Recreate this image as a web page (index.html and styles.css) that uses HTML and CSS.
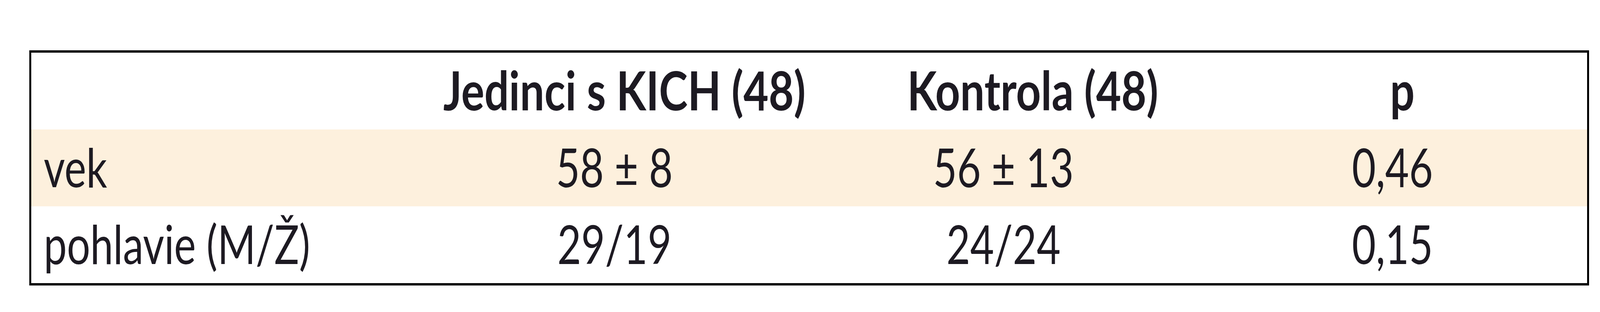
FILE: index.html
```html
<!DOCTYPE html>
<html lang="sk">
<head>
<meta charset="utf-8">
<title>Tabuľka</title>
<link rel="stylesheet" href="styles.css">
</head>
<body>
<div class="table">
  <div class="row head">
    <div class="cell label"></div>
    <div class="cell"><span class="txt">Jedinci s KICH (48)</span></div>
    <div class="cell"><span class="txt">Kontrola (48)</span></div>
    <div class="cell"><span class="txt">p</span></div>
  </div>
  <div class="row shaded">
    <div class="cell label"><span class="txt">vek</span></div>
    <div class="cell"><span class="txt">58 ± 8</span></div>
    <div class="cell"><span class="txt">56 ± 13</span></div>
    <div class="cell"><span class="txt">0,46</span></div>
  </div>
  <div class="row">
    <div class="cell label"><span class="txt">pohlavie (M/Ž)</span></div>
    <div class="cell"><span class="txt">29/19</span></div>
    <div class="cell"><span class="txt">24/24</span></div>
    <div class="cell"><span class="txt">0,15</span></div>
  </div>
</div>
</body>
</html>
```
FILE: styles.css
```css
html, body {
  margin: 0;
  padding: 0;
  background: #ffffff;
}
body {
  padding: 129px 0.69vw 0 1.82vw;
}
.table {
  border-style: solid;
  border-color: #000000;
  border-width: 6px 5px;
  font-family: Lato, "Open Sans", sans-serif;
  font-size: 137px;
  color: #1d1a22;
}
.row {
  display: grid;
  grid-template-columns: repeat(4, 1fr);
  height: 197px;
}
.shaded {
  background: #fdf0dd;
}
.cell {
  line-height: 190px;
  text-align: center;
  white-space: nowrap;
}
.txt {
  display: inline-block;
  transform: scaleX(0.77);
  transform-origin: center;
}
.label {
  text-align: left;
  padding-left: 0.8vw;
}
.label .txt {
  transform-origin: left center;
}
.head .cell {
  font-weight: 700;
}
.head .txt {
  transform: scaleX(0.81);
}
```
